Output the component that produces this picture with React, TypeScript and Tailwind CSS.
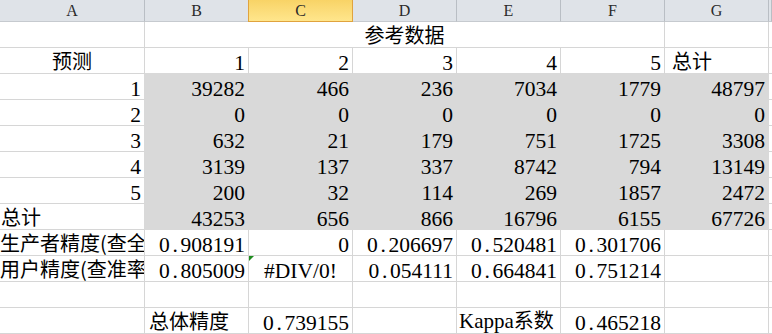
import React from "react";

const GRID = "grid grid-cols-[145px_104px_104px_104px_104px_104px_104px_1fr]";

type Align = "l" | "r" | "c";

function Cell({
  children,
  align = "r",
  gray = false,
  rGray = false,
  bGray = false,
  span5 = false,
  clip = false,
  pad = "",
  extra,
}: {
  children?: React.ReactNode;
  align?: Align;
  gray?: boolean;
  rGray?: boolean;
  bGray?: boolean;
  span5?: boolean;
  clip?: boolean;
  pad?: string;
  extra?: React.ReactNode;
}) {
  const justify =
    align === "r" ? "justify-end pr-[3px]" : align === "c" ? "justify-center" : "justify-start";
  return (
    <div
      className={[
        "relative h-[26px] border-r border-b flex items-end whitespace-nowrap text-black",
        clip ? "overflow-hidden" : "",
        gray ? "bg-[#d9d9d9]" : "bg-white",
        gray || rGray ? "border-r-[#d9d9d9]" : "border-r-[#d6d6d6]",
        gray || bGray ? "border-b-[#d9d9d9]" : "border-b-[#d6d6d6]",
        span5 ? "col-span-5" : "",
        justify,
        pad,
      ].join(" ")}
    >
      {extra}
      {children}
    </div>
  );
}

function Num({ v }: { v: string }) {
  if (v.includes(".")) {
    const [a, b] = v.split(".");
    return (
      <span className="font-['Liberation_Serif'] text-[21.5px] leading-[19px]">
        {a}
        <span className="inline-block w-[0.5em] text-center">.</span>
        {b}
      </span>
    );
  }
  return <span className="font-['Liberation_Serif'] text-[21.5px] leading-[19px]">{v}</span>;
}

function Zh({ children }: { children: React.ReactNode }) {
  return <span className="font-['Noto_Sans_CJK_SC'] text-[20px] leading-[24px]">{children}</span>;
}

function Header() {
  const letters = ["A", "B", "C", "D", "E", "F", "G", ""];
  return (
    <div className={GRID}>
      {letters.map((l, i) =>
        l === "C" ? (
          <div
            key={i}
            className="h-[22px] flex items-center justify-center bg-gradient-to-b from-[#f8d366] to-[#ffe68c] border-r border-b border-l border-r-[#e0a33e] border-b-[#e0a33e] border-l-[#e0a33e] -ml-px font-['Liberation_Serif'] text-[16px] leading-[20px] text-[#2a2a2a]"
          >
            {l}
          </div>
        ) : (
          <div
            key={i}
            className="h-[22px] flex items-center justify-center bg-[#dfe3e8] border-r border-b border-r-[#b9bec4] border-b-[#c6cacf] font-['Liberation_Serif'] text-[16px] leading-[20px] text-[#2a2a2a]"
          >
            {l}
          </div>
        )
      )}
    </div>
  );
}

const matrix: { label: string; vals: string[] }[] = [
  { label: "1", vals: ["39282", "466", "236", "7034", "1779", "48797"] },
  { label: "2", vals: ["0", "0", "0", "0", "0", "0"] },
  { label: "3", vals: ["632", "21", "179", "751", "1725", "3308"] },
  { label: "4", vals: ["3139", "137", "337", "8742", "794", "13149"] },
  { label: "5", vals: ["200", "32", "114", "269", "1857", "2472"] },
];

export default function App() {
  return (
    <div className="w-[772px] h-[334px] overflow-hidden bg-white font-['Liberation_Serif']">
      <Header />
      <div className={GRID}>
        {/* Row 2 */}
        <Cell />
        <Cell span5 align="c">
          <Zh>参考数据</Zh>
        </Cell>
        <Cell />
        <Cell />

        {/* Row 3 */}
        <Cell align="c">
          <Zh>预测</Zh>
        </Cell>
        {["1", "2", "3", "4", "5"].map((n) => (
          <Cell key={n} bGray>
            <Num v={n} />
          </Cell>
        ))}
        <Cell align="l" bGray pad="pl-[7px]">
          <Zh>总计</Zh>
        </Cell>
        <Cell />

        {/* Rows 4-8 */}
        {matrix.map((r) => (
          <React.Fragment key={r.label}>
            <Cell rGray>
              <Num v={r.label} />
            </Cell>
            {r.vals.map((v, i) => (
              <Cell key={i} gray>
                <Num v={v} />
              </Cell>
            ))}
            <Cell />
          </React.Fragment>
        ))}

        {/* Row 9 */}
        <Cell align="l" rGray pad="pl-[1px]">
          <Zh>总计</Zh>
        </Cell>
        {["43253", "656", "866", "16796", "6155", "67726"].map((v, i) => (
          <Cell key={i} gray>
            <Num v={v} />
          </Cell>
        ))}
        <Cell />

        {/* Row 10 */}
        <Cell align="l" clip>
          <Zh>生产者精度(查全率)</Zh>
        </Cell>
        <Cell>
          <Num v="0.908191" />
        </Cell>
        <Cell>
          <Num v="0" />
        </Cell>
        <Cell>
          <Num v="0.206697" />
        </Cell>
        <Cell>
          <Num v="0.520481" />
        </Cell>
        <Cell>
          <Num v="0.301706" />
        </Cell>
        <Cell />
        <Cell />

        {/* Row 11 */}
        <Cell align="l" clip>
          <Zh>用户精度(查准率)</Zh>
        </Cell>
        <Cell>
          <Num v="0.805009" />
        </Cell>
        <Cell
          align="c"
          extra={
            <span className="absolute top-0 left-0 w-0 h-0 border-t-[5px] border-t-[#1e8c1e] border-r-[5px] border-r-transparent" />
          }
        >
          <span className="font-['Liberation_Serif'] text-[21.5px] leading-[19px]">#DIV/0!</span>
        </Cell>
        <Cell>
          <Num v="0.054111" />
        </Cell>
        <Cell>
          <Num v="0.664841" />
        </Cell>
        <Cell>
          <Num v="0.751214" />
        </Cell>
        <Cell />
        <Cell />

        {/* Row 12 */}
        {Array.from({ length: 8 }).map((_, i) => (
          <Cell key={i} />
        ))}

        {/* Row 13 */}
        <Cell />
        <Cell align="l" pad="pl-[4px]">
          <Zh>总体精度</Zh>
        </Cell>
        <Cell>
          <Num v="0.739155" />
        </Cell>
        <Cell />
        <Cell align="l" pad="pl-[2px]">
          <Zh>
            <span className="font-['Liberation_Serif'] text-[21px]">Kappa</span>系数
          </Zh>
        </Cell>
        <Cell>
          <Num v="0.465218" />
        </Cell>
        <Cell />
        <Cell />
      </div>
    </div>
  );
}
